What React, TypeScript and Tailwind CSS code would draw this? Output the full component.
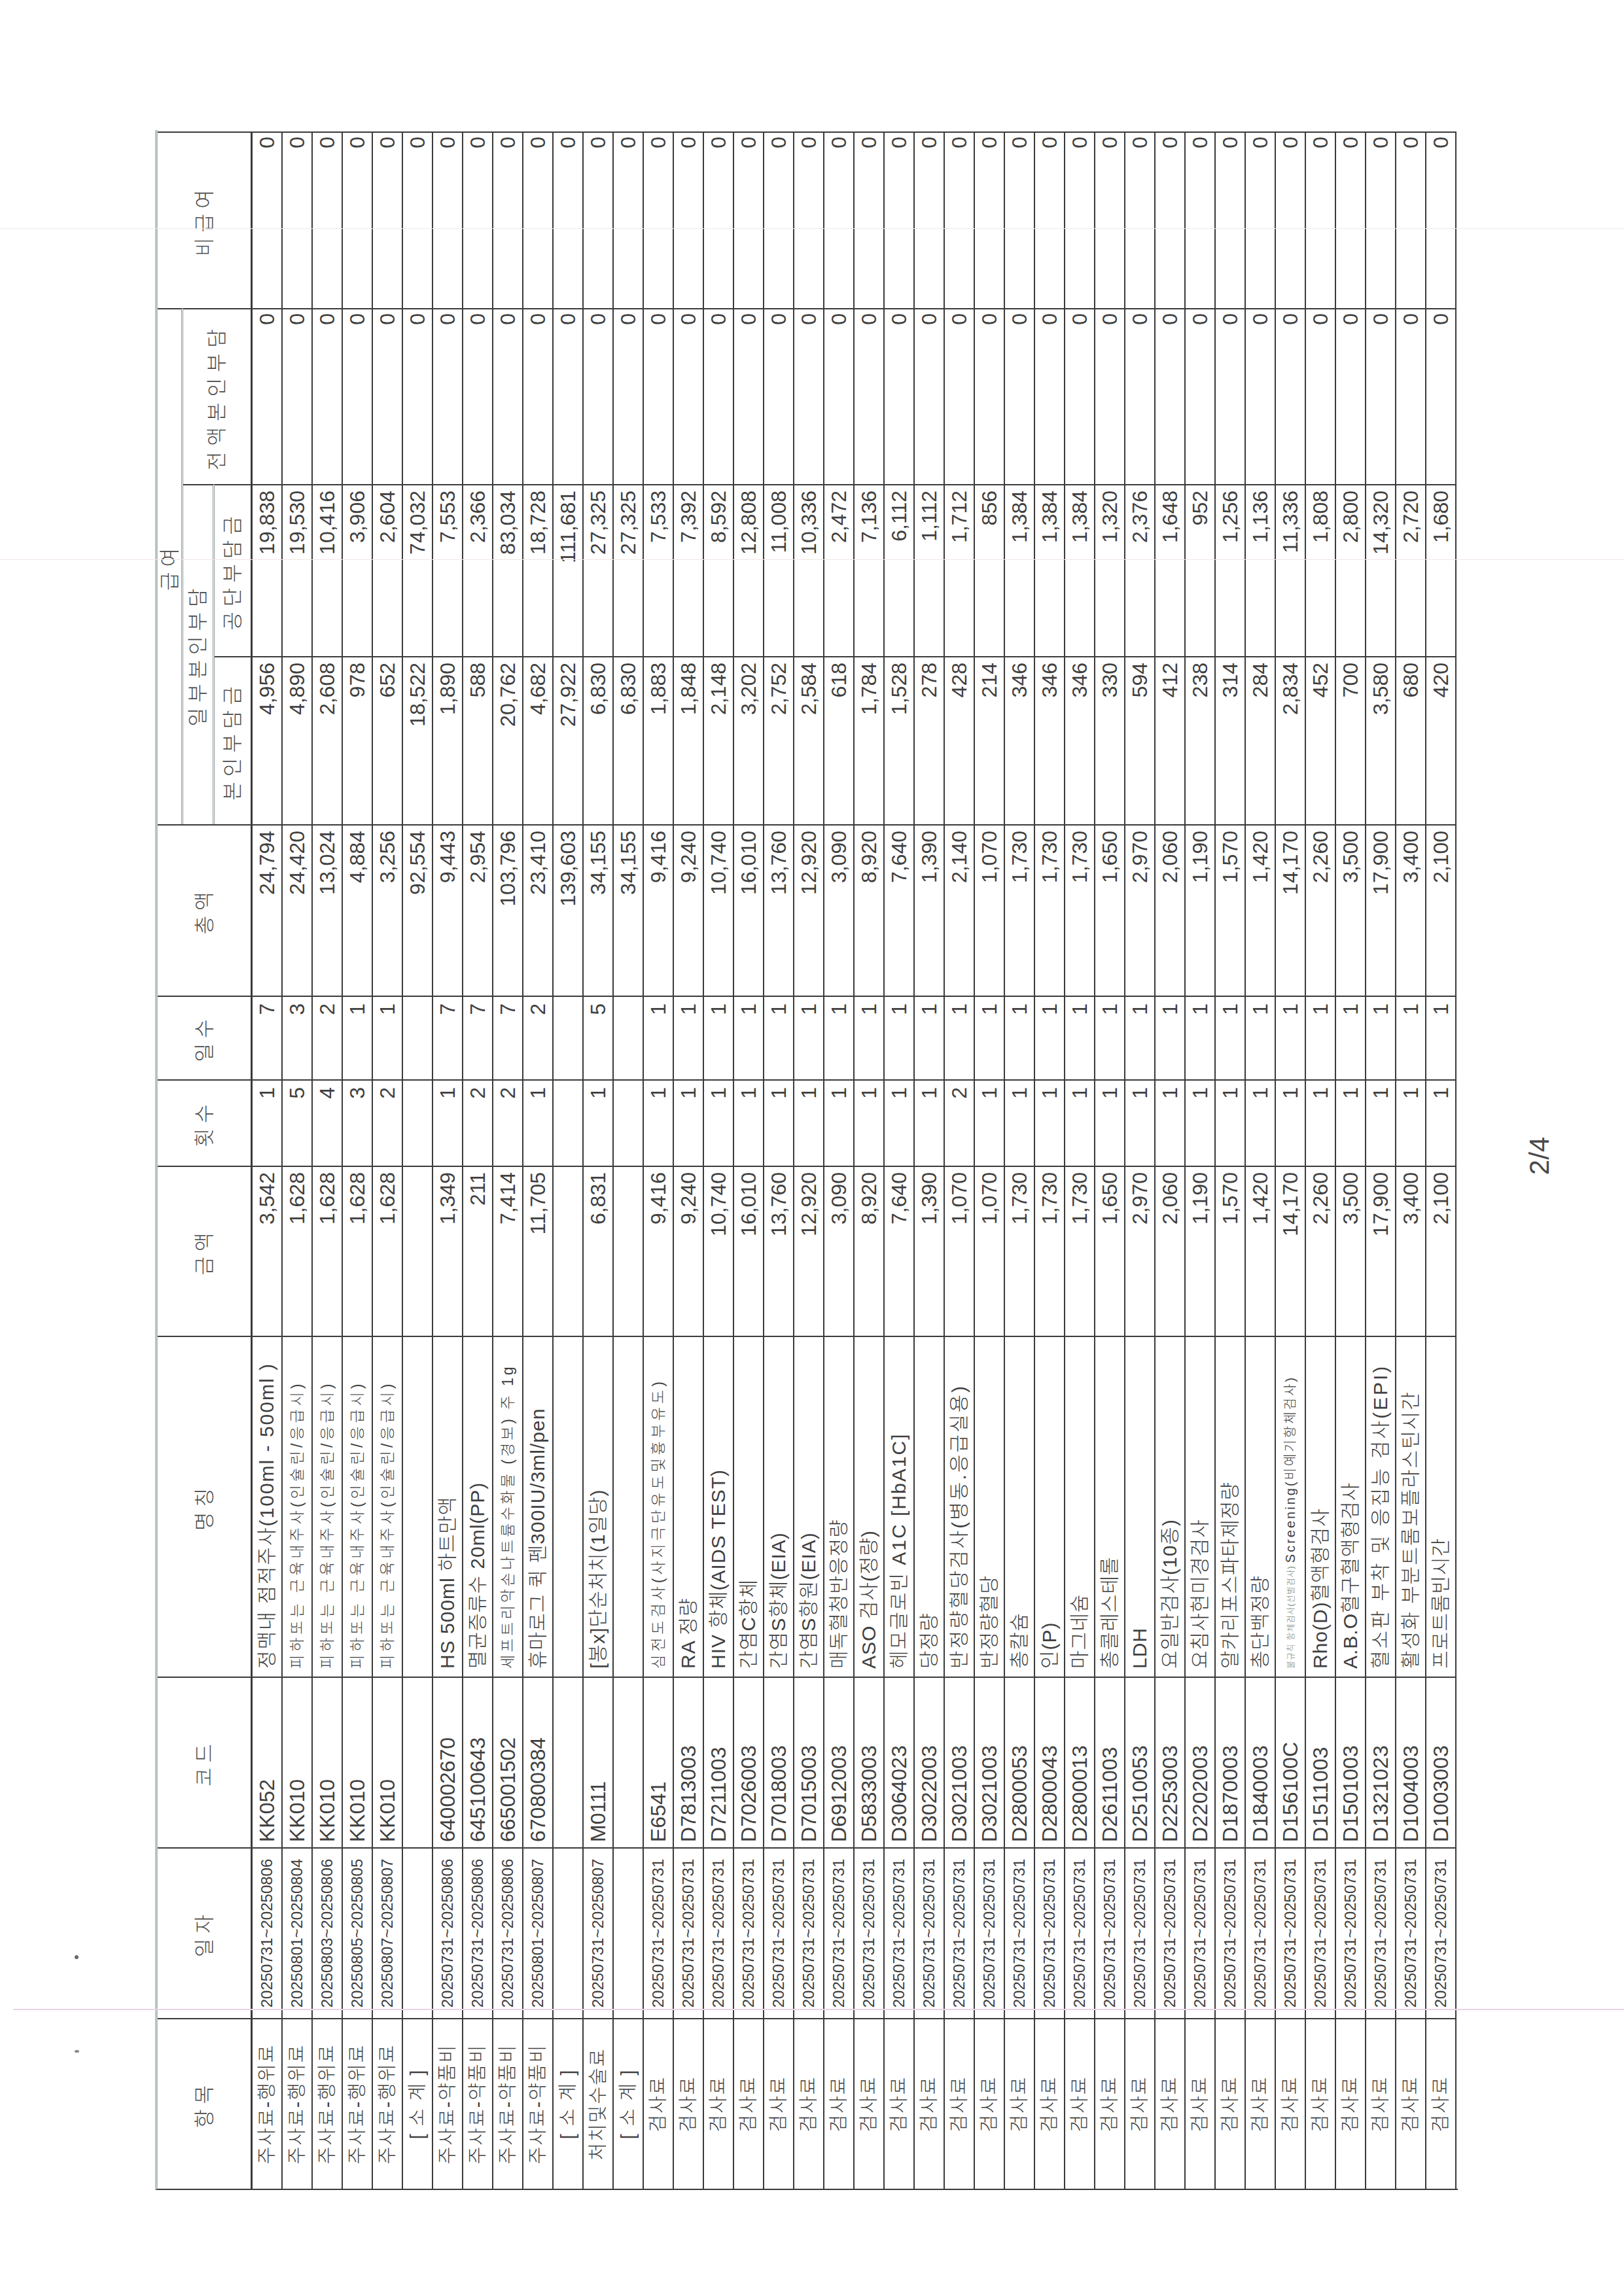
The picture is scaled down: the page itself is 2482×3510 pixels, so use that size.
import React from "react";

type Row = {
  item: string;
  date?: string;
  code?: string;
  name?: React.ReactNode;
  nameCls?: string;
  amt?: string;
  cnt?: string;
  days?: string;
  total: string;
  self: string;
  corp: string;
};

const INJ = "피하또는 근육내주사(인슐린/응급시)";
const SMALL5 = "text-[23px] tracking-[5px]";

const rows: Row[] = [
  { item: "주사료-행위료", date: "20250731~20250806", code: "KK052", name: "정맥내 점적주사(100ml - 500ml )", nameCls: "text-[30px] tracking-[2px]", amt: "3,542", cnt: "1", days: "7", total: "24,794", self: "4,956", corp: "19,838" },
  { item: "주사료-행위료", date: "20250801~20250804", code: "KK010", name: INJ, nameCls: SMALL5, amt: "1,628", cnt: "5", days: "3", total: "24,420", self: "4,890", corp: "19,530" },
  { item: "주사료-행위료", date: "20250803~20250806", code: "KK010", name: INJ, nameCls: SMALL5, amt: "1,628", cnt: "4", days: "2", total: "13,024", self: "2,608", corp: "10,416" },
  { item: "주사료-행위료", date: "20250805~20250805", code: "KK010", name: INJ, nameCls: SMALL5, amt: "1,628", cnt: "3", days: "1", total: "4,884", self: "978", corp: "3,906" },
  { item: "주사료-행위료", date: "20250807~20250807", code: "KK010", name: INJ, nameCls: SMALL5, amt: "1,628", cnt: "2", days: "1", total: "3,256", self: "652", corp: "2,604" },
  { item: "[ 소 계 ]", total: "92,554", self: "18,522", corp: "74,032" },
  { item: "주사료-약품비", date: "20250731~20250806", code: "640002670", name: "HS 500ml 하트만액", amt: "1,349", cnt: "1", days: "7", total: "9,443", self: "1,890", corp: "7,553" },
  { item: "주사료-약품비", date: "20250731~20250806", code: "645100643", name: "멸균증류수 20ml(PP)", amt: "211", cnt: "2", days: "7", total: "2,954", self: "588", corp: "2,366" },
  { item: "주사료-약품비", date: "20250731~20250806", code: "665001502", name: "세프트리악손나트륨수화물 (경보) 주 1g", nameCls: "text-[23px] tracking-[4px]", amt: "7,414", cnt: "2", days: "7", total: "103,796", self: "20,762", corp: "83,034" },
  { item: "주사료-약품비", date: "20250801~20250807", code: "670800384", name: "휴마로그 퀵 펜300IU/3ml/pen", amt: "11,705", cnt: "1", days: "2", total: "23,410", self: "4,682", corp: "18,728" },
  { item: "[ 소 계 ]", total: "139,603", self: "27,922", corp: "111,681" },
  { item: "처치및수술료", date: "20250731~20250807", code: "M0111", name: "[봉x]단순처치(1일당)", amt: "6,831", cnt: "1", days: "5", total: "34,155", self: "6,830", corp: "27,325" },
  { item: "[ 소 계 ]", total: "34,155", self: "6,830", corp: "27,325" },
  { item: "검사료", date: "20250731~20250731", code: "E6541", name: "심전도검사(사지극단유도및흉부유도)", nameCls: SMALL5, amt: "9,416", cnt: "1", days: "1", total: "9,416", self: "1,883", corp: "7,533" },
  { item: "검사료", date: "20250731~20250731", code: "D7813003", name: "RA 정량", amt: "9,240", cnt: "1", days: "1", total: "9,240", self: "1,848", corp: "7,392" },
  { item: "검사료", date: "20250731~20250731", code: "D7211003", name: "HIV 항체(AIDS TEST)", amt: "10,740", cnt: "1", days: "1", total: "10,740", self: "2,148", corp: "8,592" },
  { item: "검사료", date: "20250731~20250731", code: "D7026003", name: "간염C항체", amt: "16,010", cnt: "1", days: "1", total: "16,010", self: "3,202", corp: "12,808" },
  { item: "검사료", date: "20250731~20250731", code: "D7018003", name: "간염S항체(EIA)", amt: "13,760", cnt: "1", days: "1", total: "13,760", self: "2,752", corp: "11,008" },
  { item: "검사료", date: "20250731~20250731", code: "D7015003", name: "간염S항원(EIA)", amt: "12,920", cnt: "1", days: "1", total: "12,920", self: "2,584", corp: "10,336" },
  { item: "검사료", date: "20250731~20250731", code: "D6912003", name: "매독혈청반응정량", amt: "3,090", cnt: "1", days: "1", total: "3,090", self: "618", corp: "2,472" },
  { item: "검사료", date: "20250731~20250731", code: "D5833003", name: "ASO 검사(정량)", amt: "8,920", cnt: "1", days: "1", total: "8,920", self: "1,784", corp: "7,136" },
  { item: "검사료", date: "20250731~20250731", code: "D3064023", name: "헤모글로빈 A1C [HbA1C]", nameCls: "text-[30px] tracking-[2px]", amt: "7,640", cnt: "1", days: "1", total: "7,640", self: "1,528", corp: "6,112" },
  { item: "검사료", date: "20250731~20250731", code: "D3022003", name: "당정량", amt: "1,390", cnt: "1", days: "1", total: "1,390", self: "278", corp: "1,112" },
  { item: "검사료", date: "20250731~20250731", code: "D3021003", name: "반정량혈당검사(병동.응급실용)", nameCls: "text-[30px] tracking-[3px]", amt: "1,070", cnt: "2", days: "1", total: "2,140", self: "428", corp: "1,712" },
  { item: "검사료", date: "20250731~20250731", code: "D3021003", name: "반정량혈당", amt: "1,070", cnt: "1", days: "1", total: "1,070", self: "214", corp: "856" },
  { item: "검사료", date: "20250731~20250731", code: "D2800053", name: "총칼슘", amt: "1,730", cnt: "1", days: "1", total: "1,730", self: "346", corp: "1,384" },
  { item: "검사료", date: "20250731~20250731", code: "D2800043", name: "인(P)", amt: "1,730", cnt: "1", days: "1", total: "1,730", self: "346", corp: "1,384" },
  { item: "검사료", date: "20250731~20250731", code: "D2800013", name: "마그네슘", amt: "1,730", cnt: "1", days: "1", total: "1,730", self: "346", corp: "1,384" },
  { item: "검사료", date: "20250731~20250731", code: "D2611003", name: "총콜레스테롤", amt: "1,650", cnt: "1", days: "1", total: "1,650", self: "330", corp: "1,320" },
  { item: "검사료", date: "20250731~20250731", code: "D2510053", name: "LDH", amt: "2,970", cnt: "1", days: "1", total: "2,970", self: "594", corp: "2,376" },
  { item: "검사료", date: "20250731~20250731", code: "D2253003", name: "요일반검사(10종)", amt: "2,060", cnt: "1", days: "1", total: "2,060", self: "412", corp: "1,648" },
  { item: "검사료", date: "20250731~20250731", code: "D2202003", name: "요침사현미경검사", amt: "1,190", cnt: "1", days: "1", total: "1,190", self: "238", corp: "952" },
  { item: "검사료", date: "20250731~20250731", code: "D1870003", name: "알카리포스파타제정량", amt: "1,570", cnt: "1", days: "1", total: "1,570", self: "314", corp: "1,256" },
  { item: "검사료", date: "20250731~20250731", code: "D1840003", name: "총단백정량", amt: "1,420", cnt: "1", days: "1", total: "1,420", self: "284", corp: "1,136" },
  {
    item: "검사료",
    date: "20250731~20250731",
    code: "D156100C",
    name: (
      <>
        <span className="text-[13px] tracking-[1px] text-[#7d8a7d]">불규칙 항체검사(선별검사)</span>
        <span className="text-[20px] tracking-[3px] ml-[4px]">Screening(비예기항체검사)</span>
      </>
    ),
    nameCls: "",
    amt: "14,170",
    cnt: "1",
    days: "1",
    total: "14,170",
    self: "2,834",
    corp: "11,336",
  },
  { item: "검사료", date: "20250731~20250731", code: "D1511003", name: "Rho(D)혈액형검사", amt: "2,260", cnt: "1", days: "1", total: "2,260", self: "452", corp: "1,808" },
  { item: "검사료", date: "20250731~20250731", code: "D1501003", name: "A.B.O혈구혈액형검사", amt: "3,500", cnt: "1", days: "1", total: "3,500", self: "700", corp: "2,800" },
  { item: "검사료", date: "20250731~20250731", code: "D1321023", name: "혈소판 부착 및 응집능 검사(EPI)", nameCls: "text-[30px] tracking-[3px]", amt: "17,900", cnt: "1", days: "1", total: "17,900", self: "3,580", corp: "14,320" },
  { item: "검사료", date: "20250731~20250731", code: "D1004003", name: "활성화 부분트롬보플라스틴시간", nameCls: "text-[30px] tracking-[2px]", amt: "3,400", cnt: "1", days: "1", total: "3,400", self: "680", corp: "2,720" },
  { item: "검사료", date: "20250731~20250731", code: "D1003003", name: "프로트롬빈시간", amt: "2,100", cnt: "1", days: "1", total: "2,100", self: "420", corp: "1,680" },
];

const CELL = "border-r-2 border-b-2 border-[#3b3b3b] flex items-center overflow-hidden whitespace-nowrap leading-none";
const NUM = CELL + " justify-end pr-2 text-[32px]";
const HEAD = "border-r-2 border-[#3b3b3b] flex items-center justify-center whitespace-nowrap leading-none text-[31px] tracking-[8px] text-[#4a4a4a]";

function Header() {
  return (
    <>
      <div className={HEAD + " col-start-1 row-start-1 row-span-3 border-b-[3px]"}>항목</div>
      <div className={HEAD + " col-start-2 row-start-1 row-span-3 border-b-[3px]"}>일자</div>
      <div className={HEAD + " col-start-3 row-start-1 row-span-3 border-b-[3px]"}>코드</div>
      <div className={HEAD + " col-start-4 row-start-1 row-span-3 border-b-[3px]"}>명칭</div>
      <div className={HEAD + " col-start-5 row-start-1 row-span-3 border-b-[3px]"}>금액</div>
      <div className={HEAD + " col-start-6 row-start-1 row-span-3 border-b-[3px]"}>횟수</div>
      <div className={HEAD + " col-start-7 row-start-1 row-span-3 border-b-[3px]"}>일수</div>
      <div className={HEAD + " col-start-8 row-start-1 row-span-3 border-b-[3px]"}>총액</div>
      <div className={HEAD + " col-start-9 col-span-3 row-start-1 border-b-[3px] border-b-[#8f9999] border-double text-[29px] tracking-[4px]"}>급여</div>
      <div className={HEAD + " col-start-12 row-start-1 row-span-3 border-b-[3px]"}>비급여</div>
      <div className={HEAD + " col-start-9 col-span-2 row-start-2 border-b-[3px] border-b-[#8f9999] border-double text-[29px] tracking-[8px]"}>일부본인부담</div>
      <div className={HEAD + " col-start-11 row-start-2 row-span-2 border-b-[3px] text-[29px] tracking-[9px]"}>전액본인부담</div>
      <div className={HEAD + " col-start-9 row-start-3 border-b-[3px] text-[29px] tracking-[6px]"}>본인부담금</div>
      <div className={HEAD + " col-start-10 row-start-3 border-b-[3px] text-[29px] tracking-[6px]"}>공단부담금</div>
    </>
  );
}

function DataRow({ r }: { r: Row }) {
  return (
    <>
      <div className={CELL + " justify-center text-[29px] tracking-[2px]"}>{r.item}</div>
      <div className={CELL + " justify-center text-[24px]"}>{r.date ?? ""}</div>
      <div className={CELL + " pl-2 text-[32px]"}>{r.code ?? ""}</div>
      <div className={CELL + " pl-3 " + (r.nameCls ?? "text-[30px] tracking-[1px]")}>{r.name ?? ""}</div>
      <div className={NUM}>{r.amt ?? ""}</div>
      <div className={NUM + " pr-[10px]"}>{r.cnt ?? ""}</div>
      <div className={NUM + " pr-[10px]"}>{r.days ?? ""}</div>
      <div className={NUM}>{r.total}</div>
      <div className={NUM}>{r.self}</div>
      <div className={NUM}>{r.corp}</div>
      <div className={NUM + " text-[30px] pr-[6px]"}>0</div>
      <div className={NUM + " text-[30px] pr-[6px]"}>0</div>
    </>
  );
}

export default function App() {
  return (
    <div className="relative w-[2482px] h-[3510px] bg-white overflow-hidden font-['Liberation_Sans','Noto_Sans_CJK_KR',sans-serif] font-light text-[#404040]">
      <div className="pl-[237px] pt-[199px]">
        <div className="w-[2191px] h-[3149px] flex items-center justify-center">
          <div className="w-[3149px] h-[2191px] shrink-0 -rotate-90 flex flex-col">
            <div className="grid grid-cols-[261px_261px_261px_521px_260px_132px_128px_262px_257px_263px_269px_270px] grid-rows-[39px_48px_58px_repeat(40,46px)] border-t-4 border-t-[#b9c3c3] border-l-2 border-l-[#3b3b3b] h-[1991px]">
              <Header />
              {rows.map((r, i) => (
                <DataRow key={i} r={r} />
              ))}
            </div>
            <div className="h-[200px] pt-[104px] flex justify-center pl-[13px]">
              <span className="text-[42px] leading-none text-[#4a4a4a]">2/4</span>
            </div>
          </div>
        </div>
      </div>
      {/* scan artefacts */}
      <div className="absolute left-[20px] right-0 top-[3071px] h-[2px] bg-[#ecd3e3]" />
      <div className="absolute left-[0px] right-0 top-[349px] h-[1px] bg-[#ececec]" />
      <div className="absolute left-[0px] right-0 top-[855px] h-[1px] bg-[#f2e4e4]" />
      <div className="absolute left-[114px] top-[2989px] w-[6px] h-[6px] rounded-full bg-[#6a6a6a]" />
      <div className="absolute left-[114px] top-[3134px] w-[7px] h-[4px] rounded-full bg-[#8a8a8a]" />
    </div>
  );
}
